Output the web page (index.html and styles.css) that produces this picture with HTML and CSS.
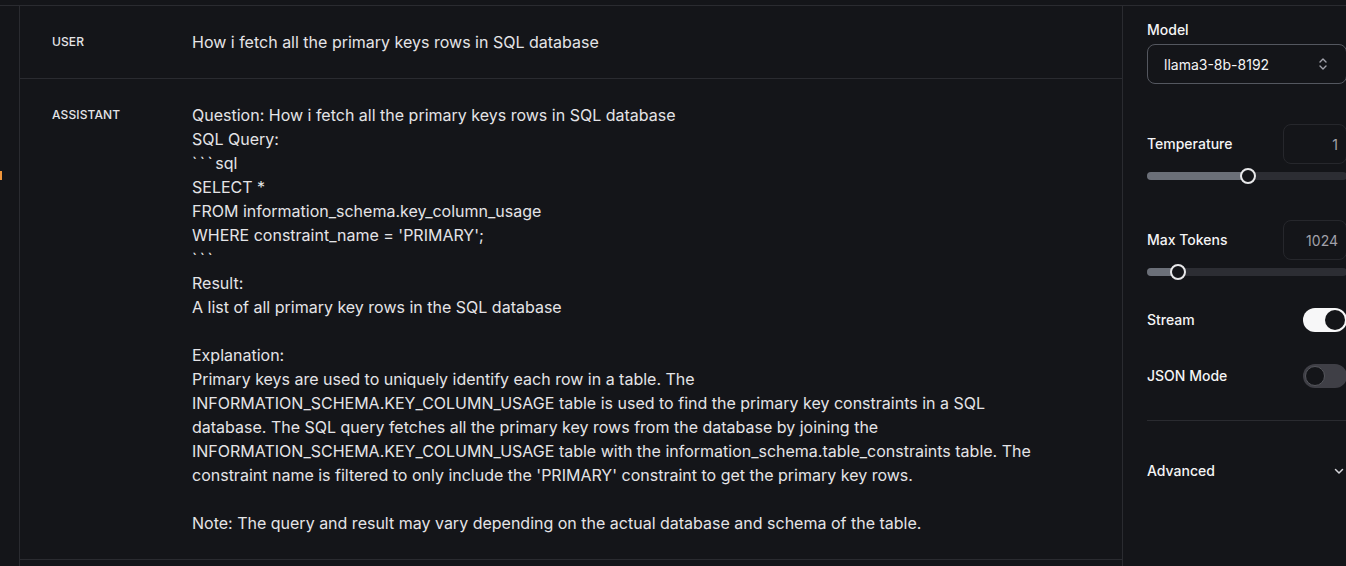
FILE: index.html
```html
<!DOCTYPE html>
<html lang="en">
<head>
<meta charset="utf-8">
<title>Playground</title>
<link rel="stylesheet" href="styles.css">
</head>
<body>
<div class="page">
  <div class="frame">
    <aside class="rail"><span class="rail-mark"></span></aside>
    <main class="main">
      <div class="row">
        <div class="role">USER</div>
        <div class="msg">How i fetch all the primary keys rows in SQL database</div>
      </div>
      <div class="row">
        <div class="role">ASSISTANT</div>
        <div class="msg">Question: How i fetch all the primary keys rows in SQL database<br>SQL Query:<br><span class="tick">&#96;&#96;&#96;</span>sql<br>SELECT *<br>FROM information_schema.key_column_usage<br>WHERE constraint_name = 'PRIMARY';<br><span class="tick">&#96;&#96;&#96;</span><br>Result:<br>A list of all primary key rows in the SQL database<br><br>Explanation:<br>Primary keys are used to uniquely identify each row in a table. The<br>INFORMATION_SCHEMA.KEY_COLUMN_USAGE table is used to find the primary key constraints in a SQL<br>database. The SQL query fetches all the primary key rows from the database by joining the<br>INFORMATION_SCHEMA.KEY_COLUMN_USAGE table with the information_schema.table_constraints table. The<br>constraint name is filtered to only include the 'PRIMARY' constraint to get the primary key rows.<br><br>Note: The query and result may vary depending on the actual database and schema of the table.</div>
      </div>
    </main>
    <aside class="side">
      <div class="field">
        <div class="label">Model</div>
        <div class="select">
          <span>llama3-8b-8192</span>
          <svg class="updown" width="10" height="14" viewBox="0 0 10 14" fill="none" stroke="currentColor" stroke-width="1.4" stroke-linecap="round" stroke-linejoin="round"><path d="M2 5 L5 2 L8 5"/><path d="M2 9 L5 12 L8 9"/></svg>
        </div>
      </div>

      <div class="param first">
        <div class="param-head">
          <div class="label">Temperature</div>
          <div class="numbox">1</div>
        </div>
        <div class="slider"><div class="fill fill-temp"></div><div class="thumb thumb-temp"></div></div>
      </div>

      <div class="param">
        <div class="param-head">
          <div class="label">Max Tokens</div>
          <div class="numbox">1024</div>
        </div>
        <div class="slider"><div class="fill fill-tok"></div><div class="thumb thumb-tok"></div></div>
      </div>

      <div class="toggle-row">
        <div class="label">Stream</div>
        <div class="toggle on"><span class="knob"></span></div>
      </div>
      <div class="toggle-row">
        <div class="label">JSON Mode</div>
        <div class="toggle off"><span class="knob"></span></div>
      </div>

      <div class="divider"></div>

      <div class="advanced">
        <div class="label">Advanced</div>
        <svg class="chev" width="12" height="12" viewBox="0 0 12 12" fill="none" stroke="currentColor" stroke-width="1.5" stroke-linecap="round" stroke-linejoin="round"><path d="M2.5 4.5 L6 8 L9.5 4.5"/></svg>
      </div>
    </aside>
  </div>
</div>
</body>
</html>
```

FILE: styles.css
```css
* { box-sizing: border-box; }
html, body {
  margin: 0;
  padding: 0;
  background: #141519;
  height: 100%;
  overflow: hidden;
}
body {
  font-family: Inter, "Liberation Sans", sans-serif;
  color: #e4e4e7;
}
.page {
  padding-top: 5px;
  height: 100%;
}
.frame {
  display: flex;
  border-top: 1px solid #2a2b30;
  height: 100%;
  width: 1371px;
}
.rail {
  position: relative;
  width: 20px;
  flex: 0 0 20px;
  border-right: 1px solid #2a2b30;
}
.rail-mark {
  position: absolute;
  left: 0;
  top: 165px;
  width: 2px;
  height: 9px;
  background: #f0953a;
}
.main {
  flex: 0 0 1103px;
  border-right: 1px solid #2a2b30;
}
.row {
  display: flex;
  padding: 24px 0 24px 32px;
  border-bottom: 1px solid #2a2b30;
}
.role {
  flex: 0 0 140px;
  font-size: 12px;
  line-height: 24px;
  font-weight: 500;
  color: #e4e4e7;
  letter-spacing: 0.01em;
}
.msg {
  font-size: 16px;
  line-height: 24px;
  white-space: nowrap;
  color: #e4e4e7;
}
.tick { letter-spacing: 2.6px; }
.side {
  flex: 0 0 248px;
  padding: 14px 24px 0 24px;
}
.label {
  font-size: 14px;
  line-height: 20px;
  font-weight: 500;
  color: #f4f4f5;
}
.field .label { margin-bottom: 4px; }
.select {
  height: 40px;
  border: 1px solid #54575f;
  border-radius: 8px;
  display: flex;
  align-items: center;
  justify-content: space-between;
  padding: 0 18px 0 16px;
  font-size: 14px;
  color: #f4f4f5;
}
.updown { color: #a1a1aa; }
.param { margin-bottom: 32px; }
.param.first { margin-top: 40px; margin-bottom: 40px; }
.param-head {
  display: flex;
  align-items: center;
  justify-content: space-between;
  height: 40px;
}
.numbox {
  width: 64px;
  height: 40px;
  border: 1px solid #26272c;
  border-radius: 8px;
  display: flex;
  align-items: center;
  justify-content: flex-end;
  padding-right: 8px;
  font-size: 14px;
  color: #a1a1aa;
}
.slider {
  position: relative;
  margin-top: 8px;
  height: 8px;
  border-radius: 4px;
  background: #2c2d33;
}
.fill {
  position: absolute;
  left: 0;
  top: 0;
  bottom: 0;
  border-radius: 4px;
  background: #6b6f78;
}
.fill-temp { width: 101px; }
.fill-tok { width: 31px; }
.thumb {
  position: absolute;
  top: -4px;
  width: 16px;
  height: 16px;
  border-radius: 50%;
  border: 2px solid #e8e8ea;
  background: #141519;
}
.thumb-temp { left: 93px; }
.thumb-tok { left: 23px; }
.toggle-row {
  display: flex;
  align-items: center;
  justify-content: space-between;
  height: 24px;
  margin-bottom: 32px;
}
.toggle {
  position: relative;
  width: 44px;
  height: 24px;
  border-radius: 12px;
}
.toggle.on { background: #f7f7f8; }
.toggle.off { background: #3f3f46; }
.knob {
  position: absolute;
  top: 2px;
  width: 20px;
  height: 20px;
  border-radius: 50%;
  background: #141519;
}
.toggle.on .knob { right: 2px; }
.toggle.off .knob { left: 2px; border: 1px solid #55565c; }
.divider {
  height: 1px;
  background: #2a2b30;
}
.advanced {
  display: flex;
  align-items: center;
  justify-content: space-between;
  margin-top: 40px;
  padding-right: 2px;
}
.chev { color: #d4d4d8; }
```
